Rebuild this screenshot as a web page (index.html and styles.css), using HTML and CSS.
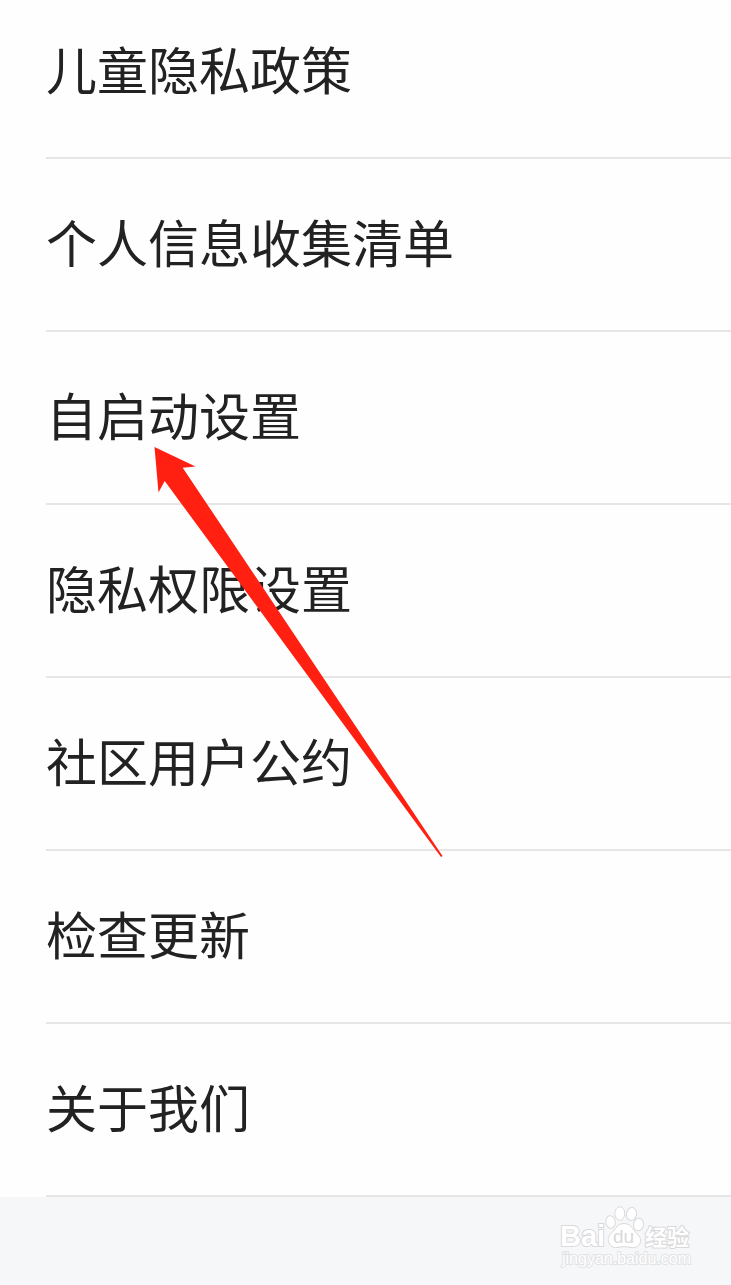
FILE: index.html
```html
<!DOCTYPE html>
<html lang="zh-CN">
<head>
<meta charset="utf-8">
<meta name="viewport" content="width=device-width, initial-scale=1">
<title>设置</title>
<link rel="stylesheet" href="styles.css">
</head>
<body>
<main class="page">
  <nav class="menu">
    <a class="menu-item" href="#children">儿童隐私政策</a>
    <a class="menu-item" href="#collection">个人信息收集清单</a>
    <a class="menu-item" href="#autostart">自启动设置</a>
    <a class="menu-item" href="#permissions">隐私权限设置</a>
    <a class="menu-item" href="#community">社区用户公约</a>
    <a class="menu-item" href="#update">检查更新</a>
    <a class="menu-item" href="#about">关于我们</a>
  </nav>
  <svg class="pointer" viewBox="0 0 290 412" aria-hidden="true">
    <path d="M0.5 1 L41.5 20.5 L28.7 21.7 L288.5 410 L287 411 L10.7 35 L4.5 46.5 Z"/>
  </svg>
</main>
<footer class="footer">
  <svg class="watermark" viewBox="0 0 134 64" role="img" aria-label="Baidu 经验">
    <g class="mark">
      <text class="brand" x="0" y="41" font-size="29">Bai</text>
      <ellipse cx="50.5" cy="17" rx="4.8" ry="6.2" transform="rotate(-8 50.5 17)"/>
      <ellipse cx="59.8" cy="8.5" rx="5" ry="6.8"/>
      <ellipse cx="71.5" cy="9" rx="5" ry="6.6" transform="rotate(10 71.5 9)"/>
      <ellipse cx="78.5" cy="19.5" rx="5" ry="6.3" transform="rotate(8 78.5 19.5)"/>
      <path d="M64 18.5C57 18.5 56 24 52 27.5C48 31 48 34 48.500 36.500C49.500 41 53 43 57 42.500C62 41.500 67 41.500 71 42.500C76 43 80 41 80.500 36.500C81 32 78 30 75 26.500C72 23 70 18.500 64 18.500Z"/>
      <text class="brand du" x="53" y="38" font-size="19">du</text>
      <text class="brand cjk" x="85" y="40" font-size="22">经验</text>
    </g>
    <text class="site" x="2" y="59" font-size="16">jingyan.baidu.com</text>
  </svg>
</footer>
</body>
</html>
```
FILE: styles.css
```css
* {
  box-sizing: border-box;
}

body {
  margin: 0;
  min-height: 100vh;
  background: #f6f7f9;
  color: #222;
  font-family: "Noto Sans CJK SC", "Noto Sans", sans-serif;
}

.page {
  position: relative;
  background: #fefefe;
}

.menu {
  display: flex;
  flex-direction: column;
  padding-left: 46px;
}

.menu-item {
  padding: 47px 0 53px;
  border-bottom: 2px solid #e6e6e6;
  color: inherit;
  font-size: 51px;
  line-height: 71px;
  text-decoration: none;
}

.menu-item:first-child {
  padding-top: 33px;
}

.pointer {
  position: absolute;
  top: 446px;
  left: 154px;
  width: 290px;
  height: 412px;
  fill: #ff2012;
  pointer-events: none;
}

.footer {
  display: flex;
  justify-content: flex-end;
  padding: 8px 37px 16px;
}

.watermark {
  width: 134px;
  height: 64px;
  overflow: visible;
}

.mark {
  fill: #fff;
  stroke: #d8d9db;
  stroke-width: 1;
}

.mark text,
.site {
  paint-order: stroke;
  stroke-width: 2;
}

.brand {
  font-family: "Liberation Sans", sans-serif;
  font-weight: 700;
}

.mark .du {
  fill: #d8d9db;
  stroke: none;
  font-weight: 400;
}

.mark .cjk {
  font-family: "Noto Sans CJK SC", sans-serif;
}

.site {
  fill: #fff;
  stroke: #e2e3e6;
  font-family: "Liberation Sans", sans-serif;
}
```
